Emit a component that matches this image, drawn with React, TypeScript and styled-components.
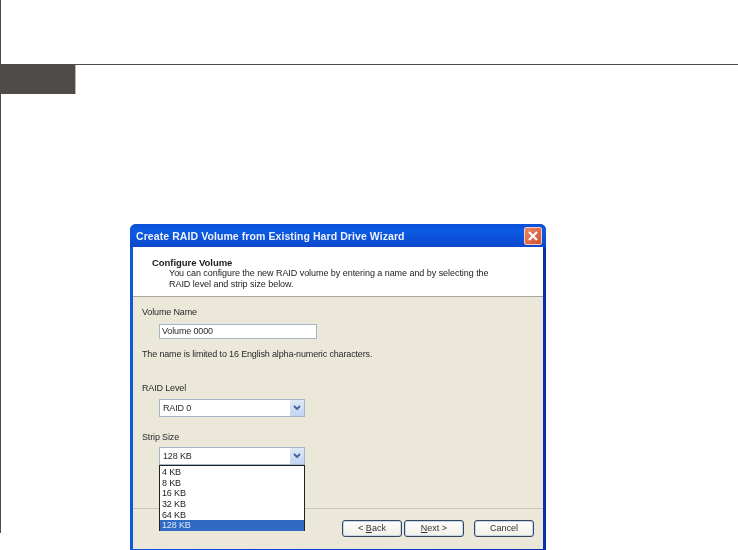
import React from "react";
import styled, { createGlobalStyle } from "styled-components";

const Global = createGlobalStyle`
  html, body { margin: 0; padding: 0; background: #fff; overflow: hidden; }
  body { width: 738px; height: 550px; font-family: "Liberation Sans", Arial, sans-serif; }
`;

const Page = styled.div`
  width: 738px;
  height: 550px;
  overflow: hidden;
  background: #fff;
`;

const Frame = styled.div`
  width: 737px;
  height: 533px;
  border-left: 1px solid #4f4b49;
`;

const TopSpace = styled.div`
  height: 64px;
  border-bottom: 1px solid #4f4b49;
`;

const Tab = styled.div`
  width: 74px;
  height: 29px;
  background: #4f4b49;
  border-right: 1px solid #bdbbba;
`;

const Wizard = styled.div`
  width: 410px;
  height: 325px;
  margin: 130px 0 0 129px;
  padding: 0 3px 2px;
  display: flex;
  flex-direction: column;
  background: linear-gradient(90deg, #0f58dc 0%, #0a3fc4 50%, #0a2fae 100%);
  border-radius: 6px 6px 0 0;
  filter: blur(0.45px);
`;

const TitleBar = styled.div`
  height: 23px;
  margin: 0 -3px;
  padding: 0 4px 0 6px;
  display: flex;
  align-items: center;
  justify-content: space-between;
  border-radius: 6px 6px 0 0;
  background: linear-gradient(180deg, #0a4fd8 0%, #0c5ae2 30%, #0a50d6 70%, #0a48c8 100%);
`;

const TitleText = styled.span`
  color: #eef2ff;
  font: bold 10.5px "Liberation Sans", sans-serif;
  letter-spacing: 0.08px;
`;

const CloseButton = styled.div`
  width: 18px;
  height: 18px;
  display: flex;
  align-items: center;
  justify-content: center;
  box-sizing: border-box;
  border: 1px solid #f0d0c0;
  border-radius: 2px;
  background: linear-gradient(135deg, #e8886c, #d4502c);
`;

const Banner = styled.div`
  height: 50px;
  box-sizing: border-box;
  padding: 10px 0 0 19px;
  background: #fff;
  border-bottom: 1px solid #a8a59c;
  font-size: 9px;
  line-height: 11px;
  letter-spacing: -0.05px;
  color: #1c1c1c;
`;

const BannerTitle = styled.div`
  font-weight: bold;
  font-size: 9.5px;
`;

const BannerText = styled.div`
  padding-left: 17px;
`;

const Body = styled.div`
  flex: 1;
  position: relative;
  display: flex;
  flex-direction: column;
  background: #ebe8da;
  font-size: 9px;
  letter-spacing: -0.15px;
  color: #2a2a2a;
`;

const Fields = styled.div`
  height: 212px;
  box-sizing: border-box;
  padding: 10px 0 0 9px;
  border-bottom: 1px solid #c9c6b8;
`;

const Label = styled.div<{ $gap: number }>`
  height: 11px;
  line-height: 11px;
  margin-top: ${(p) => p.$gap}px;
`;

const Input = styled.div`
  width: 158px;
  height: 15px;
  margin: 6px 0 0 17px;
  box-sizing: border-box;
  padding-left: 2px;
  line-height: 13px;
  background: #fff;
  border: 1px solid #a5b5c5;
`;

const Combo = styled.div<{ $top: number }>`
  width: 146px;
  height: 18px;
  margin: ${(p) => p.$top}px 0 0 17px;
  box-sizing: border-box;
  padding: 0 0 0 3px;
  display: flex;
  align-items: center;
  justify-content: space-between;
  background: #fff;
  border: 1px solid #a5b5c5;
`;

const ComboArrow = styled.div`
  width: 14px;
  height: 16px;
  display: flex;
  align-items: center;
  justify-content: center;
  background: linear-gradient(180deg, #dfe8f8, #c3d3f0);
`;

const DropList = styled.div`
  position: absolute;
  left: 26px;
  top: 168px;
  width: 146px;
  height: 66px;
  box-sizing: border-box;
  padding-top: 1px;
  background: #fff;
  border: 1px solid #222;
  z-index: 2;
`;

const DropItem = styled.div<{ $selected?: boolean }>`
  height: 10.67px;
  line-height: 10.67px;
  padding-left: 2px;
  font-size: 9px;
  color: ${(p) => (p.$selected ? "#dfe8f8" : "#222")};
  background: ${(p) => (p.$selected ? "#316ac5" : "transparent")};
`;

const Footer = styled.div`
  flex: 1;
  display: flex;
  justify-content: flex-end;
  padding: 11px 9px 0 0;
`;

const NavButton = styled.div<{ $gap?: number }>`
  width: 60px;
  height: 17px;
  margin-left: ${(p) => p.$gap ?? 0}px;
  box-sizing: border-box;
  text-align: center;
  line-height: 15px;
  font-size: 9px;
  letter-spacing: 0;
  color: #333;
  border: 1px solid #33475f;
  border-radius: 3px;
  background: linear-gradient(180deg, #fff, #f0efe6);
  box-shadow: inset 0 0 0 1px #c4d6ea;
`;

const Chevron = () => (
  <svg width="8" height="6" viewBox="0 0 8 6">
    <path d="M1 1 L4 4 L7 1" fill="none" stroke="#3f5f9c" strokeWidth="1.8" />
  </svg>
);

const X = () => (
  <svg width="12" height="12" viewBox="0 0 12 12">
    <path d="M2 2 L10 10 M10 2 L2 10" stroke="#fff" strokeWidth="2.2" />
  </svg>
);

const sizes = ["4 KB", "8 KB", "16 KB", "32 KB", "64 KB", "128 KB"];

export default function App() {
  return (
    <Page>
      <Global />
      <Frame>
        <TopSpace />
        <Tab />
        <Wizard>
          <TitleBar>
            <TitleText>Create RAID Volume from Existing Hard Drive Wizard</TitleText>
            <CloseButton><X /></CloseButton>
          </TitleBar>
          <Banner>
            <BannerTitle>Configure Volume</BannerTitle>
            <BannerText>
              You can configure the new RAID volume by entering a name and by selecting the
              <br />
              RAID level and strip size below.
            </BannerText>
          </Banner>
          <Body>
            <Fields>
              <Label $gap={0}>Volume Name</Label>
              <Input>Volume 0000</Input>
              <Label $gap={10}>The name is limited to 16 English alpha-numeric characters.</Label>
              <Label $gap={23}>RAID Level</Label>
              <Combo $top={5}>RAID 0<ComboArrow><Chevron /></ComboArrow></Combo>
              <Label $gap={15}>Strip Size</Label>
              <Combo $top={4}>128 KB<ComboArrow><Chevron /></ComboArrow></Combo>
            </Fields>
            <DropList>
              {sizes.map((s) => (
                <DropItem key={s} $selected={s === "128 KB"}>{s}</DropItem>
              ))}
            </DropList>
            <Footer>
              <NavButton>&lt; <u>B</u>ack</NavButton>
              <NavButton $gap={2}><u>N</u>ext &gt;</NavButton>
              <NavButton $gap={10}>Cancel</NavButton>
            </Footer>
          </Body>
        </Wizard>
      </Frame>
    </Page>
  );
}
